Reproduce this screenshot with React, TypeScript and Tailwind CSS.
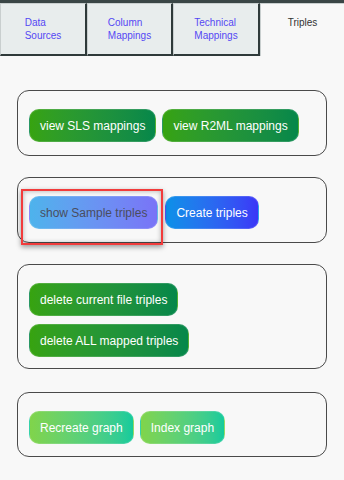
import React from "react";

const tabBase =
  "flex justify-center pt-[12px] border-l border-t border-l-[#c9cfcf] border-t-[#c9cfcf] text-[10px] leading-[13px]";

function Tab({ lines, w, active }: { lines: string[]; w: string; active?: boolean }) {
  return (
    <div
      className={
        active
          ? `${tabBase} ${w} bg-[#f8f8f8] border-l-[#2a44ff] text-[#333]`
          : `${tabBase} ${w} bg-[#e8eded] border-r-2 border-b-2 border-r-[#2f3a3a] border-b-[#2f3a3a] text-[#5548f4]`
      }
    >
      <span className="text-left">
        {lines.map((l, i) => (
          <React.Fragment key={i}>
            {l}
            {i < lines.length - 1 && <br />}
          </React.Fragment>
        ))}
      </span>
    </div>
  );
}

const btn =
  "h-[33px] px-[10px] rounded-[10px] text-[12px] leading-none whitespace-nowrap border border-white/15";
const green = `${btn} bg-gradient-to-r from-[#37a30f] to-[#05874a] text-white`;
const lime = `${btn} bg-gradient-to-r from-[#80d44a] to-[#12cb9c] text-white`;

export default function App() {
  return (
    <div className="min-h-screen bg-[#f8f8f8] font-['Liberation_Sans',Arial,sans-serif]">
      <div className="h-[3px] bg-[#3a4646]" />
      <div className="flex h-[53px]">
        <Tab lines={["Data", "Sources"]} w="w-[87px]" />
        <Tab lines={["Column", "Mappings"]} w="w-[86px]" />
        <Tab lines={["Technical", "Mappings"]} w="w-[87px]" />
        <Tab lines={["Triples"]} w="flex-1" active />
      </div>

      <div className="px-[17px] pt-[34px] flex flex-col">
        <div className="border border-[#4a4a4a] rounded-[12px] px-[11px] pt-[18px] pb-[13px] flex gap-[6px]">
          <button className={green}>view SLS mappings</button>
          <button className={green}>view R2ML mappings</button>
        </div>

        <div className="relative mt-[21px] border border-[#4a4a4a] rounded-[12px] px-[11px] pt-[18px] pb-[13px] flex gap-[7px]">
          <button className={`${btn} bg-gradient-to-r from-[#4db3ec] to-[#7973f7] text-[#4a4d5e]`}>
            show Sample triples
          </button>
          <button className={`${btn} bg-gradient-to-r from-[#0a90e8] to-[#3b35f7] text-white`}>
            Create triples
          </button>
          <div className="absolute left-[3px] top-[11px] w-[142px] h-[56px] border-2 border-[#f23c3c] shadow-[0_2px_5px_rgba(0,0,0,0.4),inset_0_0_5px_rgba(0,0,0,0.3)] pointer-events-none" />
        </div>

        <div className="mt-[21px] border border-[#4a4a4a] rounded-[12px] px-[11px] pt-[18px] pb-[11px] flex flex-col items-start gap-[8px]">
          <button className={green}>delete current file triples</button>
          <button className={green}>delete ALL mapped triples</button>
        </div>

        <div className="mt-[23px] border border-[#4a4a4a] rounded-[12px] px-[11px] pt-[18px] pb-[12px] flex gap-[6px]">
          <button className={lime}>Recreate graph</button>
          <button className={lime}>Index graph</button>
        </div>
      </div>
    </div>
  );
}
